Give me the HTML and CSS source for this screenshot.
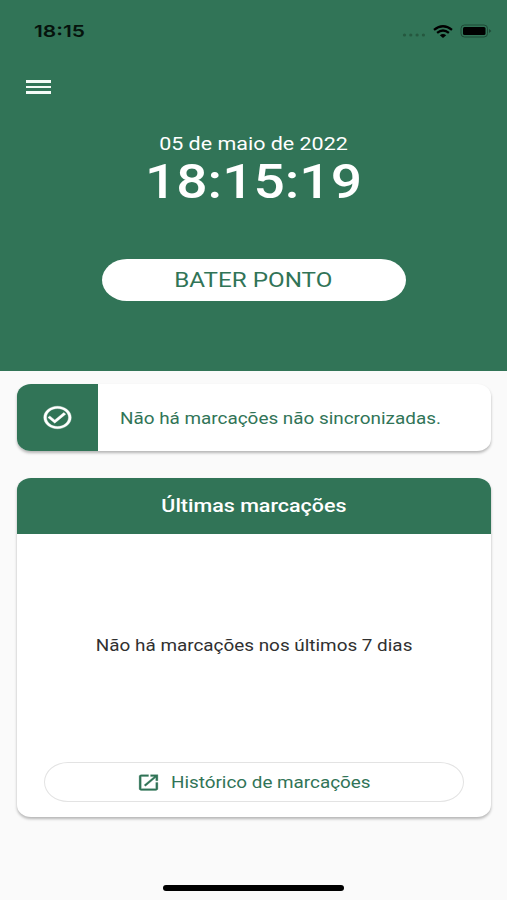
FILE: index.html
```html
<!DOCTYPE html>
<html lang="pt-BR">

<head>
    <meta charset="UTF-8">
    <meta name="viewport" content="width=device-width, initial-scale=1.0">
    <title>Bater Ponto</title>
    <link rel="stylesheet" href="styles.css">
</head>

<body>
    <header class="hero">
        <div class="status-bar">
            <span class="wide status-time">18:15</span>
            <div class="status-icons">
                <svg class="icon-signal" viewBox="0 0 24 4">
                    <circle cx="2.5" cy="2" r="1.6" />
                    <circle cx="8.8" cy="2" r="1.6" />
                    <circle cx="15.1" cy="2" r="1.6" />
                    <circle cx="21.4" cy="2" r="1.6" />
                </svg>
                <svg class="icon-wifi" viewBox="0 0 20 13" preserveAspectRatio="none">
                    <path d="M1 4.9Q10-2.3 19 4.9" />
                    <path d="M4.1 7.9Q10 3.2 15.9 7.9" />
                    <path class="wifi-dot" d="M6.8 10.2Q10 7.7 13.2 10.2L10 13z" />
                </svg>
                <svg class="icon-battery" viewBox="0 0 32 14">
                    <rect class="battery-case" x="1" y="1" width="26.5" height="12" rx="3.5" />
                    <rect x="3" y="3" width="22.5" height="8" rx="1.5" />
                    <path class="battery-cap" d="M29 5v4l2.4-2z" />
                </svg>
            </div>
        </div>

        <button class="menu-btn" type="button" aria-label="Menu">
            <span></span>
            <span></span>
            <span></span>
        </button>

        <div class="clock">
            <p class="date"><span class="wide date-text">05 de maio de 2022</span></p>
            <p class="time"><span class="wide time-text">18:15:19</span></p>
        </div>

        <button class="btn-punch" type="button"><span class="wide punch-text">BATER PONTO</span></button>
    </header>

    <main class="content">
        <section class="card sync-card">
            <div class="sync-icon">
                <svg class="icon-check" viewBox="0 0 24 24" preserveAspectRatio="none">
                    <path d="M16.59 7.58L10 14.17l-3.59-3.58L5 12l5 5 8-8zM12 2C6.48 2 2 6.48 2 12s4.48 10 10 10 10-4.48 10-10S17.52 2 12 2zm0 18c-4.42 0-8-3.58-8-8s3.58-8 8-8 8 3.58 8 8-3.58 8-8 8z" />
                </svg>
            </div>
            <p class="sync-message"><span class="wide sync-text">Não há marcações não sincronizadas.</span></p>
        </section>

        <section class="card history-card">
            <h2 class="card-title"><span class="wide title-text">Últimas marcações</span></h2>
            <p class="empty"><span class="wide empty-text">Não há marcações nos últimos 7 dias</span></p>
            <button class="btn-history" type="button">
                <svg class="icon-open" viewBox="0 0 24 24" preserveAspectRatio="none">
                    <path d="M19 19H5V5h7V3H5c-1.11 0-2 .9-2 2v14c0 1.1.89 2 2 2h14c1.1 0 2-.9 2-2v-7h-2v7zM14 3v2h3.59l-9.83 9.83 1.41 1.41L19 6.41V10h2V3h-7z" />
                </svg>
                <span class="wide history-text">Histórico de marcações</span>
            </button>
        </section>
    </main>

    <div class="home-indicator"></div>
</body>

</html>
```
FILE: styles.css
```css
:root {
    --primary-color: #317457;
    --background: #fafafa;
    --card-radius: 14px / 12px;
}

* {
    margin: 0;
    padding: 0;
    box-sizing: border-box;
    font-family: Roboto, sans-serif;
}

body {
    display: flex;
    flex-direction: column;
    height: 900px;
    background: var(--background);
    overflow: hidden;
}

button {
    border: none;
    background: none;
    cursor: pointer;
}

svg {
    display: block;
}

/* Extended lettering */
.wide {
    display: inline-block;
    white-space: nowrap;
    transform: scaleX(1.18);
}

/* Header */
.hero {
    display: flex;
    flex-direction: column;
    align-items: center;
    height: 371px;
    background: var(--primary-color);
    color: white;
}

.status-bar {
    display: flex;
    justify-content: space-between;
    align-items: center;
    width: 100%;
    height: 62px;
    padding: 0 15px 0 34px;
    color: #06130d;
}

.status-time {
    font-family: Inter, sans-serif;
    font-size: 16.5px;
    font-weight: 600;
    transform: scaleX(1.27);
    transform-origin: left;
}

.status-icons {
    display: flex;
    align-items: center;
    gap: 7px;
}

.icon-signal {
    width: 24px;
    height: 4px;
    margin-top: 8px;
    fill: #25583f;
}

.icon-wifi {
    width: 20px;
    height: 13px;
    fill: none;
    stroke: #000;
    stroke-width: 2.3;
}

.wifi-dot {
    fill: #000;
    stroke: none;
}

.icon-battery {
    width: 32px;
    height: 14px;
}

.battery-case {
    fill: none;
    stroke: #1f4a37;
}

.battery-cap {
    fill: #1f4a37;
}

.menu-btn {
    display: flex;
    flex-direction: column;
    align-self: flex-start;
    gap: 3px;
    margin: 18px 0 0 26px;
}

.menu-btn span {
    width: 25px;
    height: 2.67px;
    background: #f4fbf7;
}

.clock {
    margin-top: 38px;
    text-align: center;
}

.date {
    height: 23px;
    font-size: 19px;
    line-height: 23px;
}

.date-text {
    transform: scaleX(1.13);
}

.time {
    height: 53px;
    font-size: 49px;
    font-weight: 500;
    line-height: 54px;
}

.time-text {
    transform: scaleX(1.125);
}

.btn-punch {
    width: 304px;
    height: 42px;
    margin-top: 51px;
    border-radius: 25px / 21px;
    background: white;
    color: var(--primary-color);
    font-size: 20px;
}

.punch-text {
    transform: scaleX(1.21);
}

/* Cards */
.content {
    padding: 13px 16px 0 17px;
}

.card {
    border-radius: var(--card-radius);
    background: white;
    box-shadow: 0 2px 3px rgba(0, 0, 0, 0.28);
    overflow: hidden;
}

.sync-card {
    display: flex;
    height: 66.5px;
}

.sync-icon {
    display: flex;
    justify-content: center;
    align-items: center;
    width: 81px;
    background: var(--primary-color);
}

.icon-check {
    width: 33px;
    height: 27px;
    fill: white;
    stroke: white;
    stroke-width: 0.3;
}

.sync-message {
    padding-left: 22px;
    color: var(--primary-color);
    font-size: 16px;
    line-height: 69px;
}

.sync-text {
    transform-origin: left;
}

.history-card {
    display: flex;
    flex-direction: column;
    align-items: center;
    height: 339.5px;
    margin-top: 27px;
}

.card-title {
    width: 100%;
    height: 56px;
    background: var(--primary-color);
    color: white;
    font-size: 19px;
    font-weight: 500;
    line-height: 56px;
    text-align: center;
}

.title-text {
    transform: scaleX(1.13);
}

.empty {
    display: flex;
    flex: 1;
    align-items: center;
    padding-bottom: 5px;
    color: #303030;
    font-size: 16px;
}

.btn-history {
    display: flex;
    align-items: center;
    width: 420px;
    height: 40px;
    margin-bottom: 15px;
    padding-left: 91px;
    border: 1px solid #e3e3e3;
    border-radius: 24px / 20px;
    color: var(--primary-color);
    font-size: 16px;
    font-weight: 400;
}

.icon-open {
    width: 25px;
    height: 21px;
    margin-right: 10px;
    fill: var(--primary-color);
    stroke: var(--primary-color);
    stroke-width: 0.3;
}

.history-text {
    transform: scaleX(1.178);
    transform-origin: left;
}

.home-indicator {
    align-self: center;
    width: 181px;
    height: 6px;
    margin: auto 0 9px;
    border-radius: 3px;
    background: black;
}
```
